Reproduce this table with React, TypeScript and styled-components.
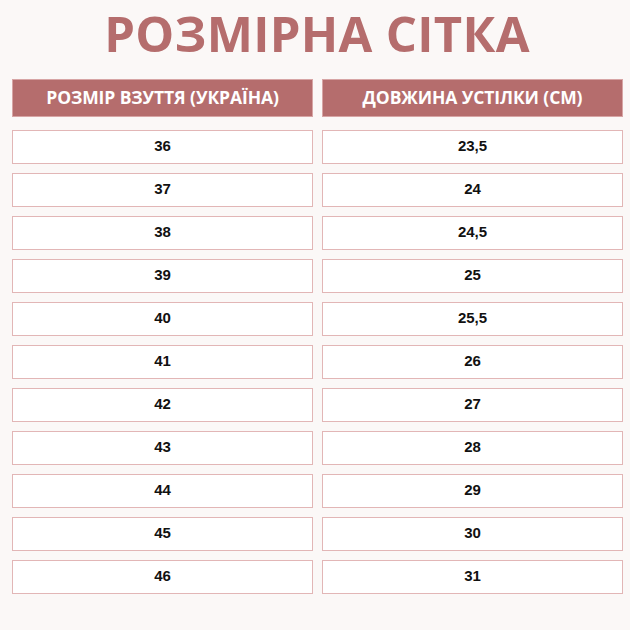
import React from "react";
import styled, { createGlobalStyle } from "styled-components";

const Global = createGlobalStyle`
  html, body { margin: 0; padding: 0; background: #fbf8f7; }
  body { width: 630px; height: 630px; overflow: hidden; }
`;

const Page = styled.div`
  width: 630px;
  height: 630px;
  box-sizing: border-box;
  padding: 0 8px 0 12px;
  background: #fbf8f7;
  display: flex;
  flex-direction: column;
`;

const Title = styled.h1`
  margin: 0;
  height: 79px;
  display: flex;
  align-items: center;
  justify-content: center;
  font-family: "Open Sans", sans-serif;
  font-weight: 700;
  font-size: 49px;
  color: #b56d6d;
  letter-spacing: 0.3px;
  padding-bottom: 13px;
  box-sizing: border-box;
`;

const Grid = styled.div`
  display: grid;
  grid-template-columns: 301px 301px;
  column-gap: 9px;
`;

const HeadCell = styled.div`
  height: 38px;
  box-sizing: border-box;
  background: #b56d6d;
  border: 1px solid #d7a5a5;
  color: #ffffff;
  font-family: "Open Sans", sans-serif;
  font-weight: 700;
  font-size: 17.5px;
  letter-spacing: -0.1px;
  display: flex;
  align-items: center;
  justify-content: center;
  padding-bottom: 2px;
  margin-bottom: 13px;
`;

const Cell = styled.div`
  height: 34px;
  box-sizing: border-box;
  background: #ffffff;
  border: 1px solid #e2b6b6;
  color: #111111;
  font-family: "Liberation Sans", Arial, sans-serif;
  font-weight: 700;
  font-size: 15px;
  display: flex;
  align-items: center;
  justify-content: center;
  padding-bottom: 3px;
  margin-bottom: 9px;
`;

const rows: [string, string][] = [
  ["36", "23,5"],
  ["37", "24"],
  ["38", "24,5"],
  ["39", "25"],
  ["40", "25,5"],
  ["41", "26"],
  ["42", "27"],
  ["43", "28"],
  ["44", "29"],
  ["45", "30"],
  ["46", "31"],
];

export default function App() {
  return (
    <>
      <Global />
      <Page>
        <Title>РОЗМІРНА СІТКА</Title>
        <Grid>
          <HeadCell>РОЗМІР ВЗУТТЯ (УКРАЇНА)</HeadCell>
          <HeadCell>ДОВЖИНА УСТІЛКИ (СМ)</HeadCell>
          {rows.map(([a, b]) => (
            <React.Fragment key={a}>
              <Cell>{a}</Cell>
              <Cell>{b}</Cell>
            </React.Fragment>
          ))}
        </Grid>
      </Page>
    </>
  );
}
